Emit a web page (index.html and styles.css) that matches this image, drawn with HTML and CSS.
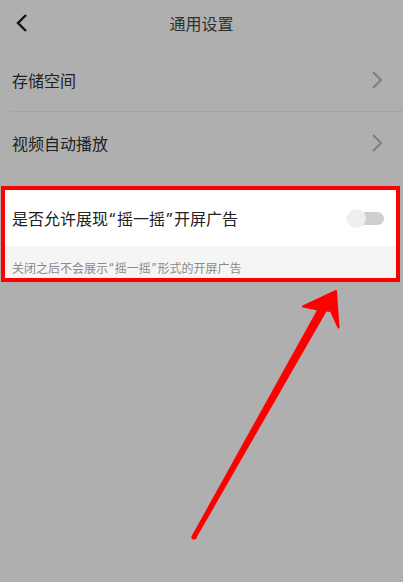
FILE: index.html
```html
<!DOCTYPE html>
<html lang="zh-CN">
<head>
  <meta charset="UTF-8">
  <meta name="viewport" content="width=device-width, initial-scale=1.0">
  <link rel="stylesheet" href="styles.css">
</head>
<body>
  <div class="header">
    <svg class="back" width="14" height="20" viewBox="0 0 14 20">
      <path d="M11 2 L3 10 L11 18" fill="none" stroke="#111" stroke-width="2.4"/>
    </svg>
    <span class="title">通用设置</span>
  </div>

  <div class="list">
    <div class="row">
      <span class="label">存储空间</span>
      <svg class="arrow-right" width="12" height="20" viewBox="0 0 12 20">
        <path d="M2 2 L10 10 L2 18" fill="none" stroke="#7e7e7e" stroke-width="2"/>
      </svg>
    </div>
    <div class="row">
      <span class="label">视频自动播放</span>
      <svg class="arrow-right" width="12" height="20" viewBox="0 0 12 20">
        <path d="M2 2 L10 10 L2 18" fill="none" stroke="#7e7e7e" stroke-width="2"/>
      </svg>
    </div>
  </div>

  <div class="highlight">
    <div class="switch-row">
      <span class="label">是否允许展现<span class="q">“</span>摇一摇<span class="q">”</span>开屏广告</span>
      <div class="switch"><div class="knob"></div></div>
    </div>
    <div class="note">关闭之后不会展示<span class="q">“</span>摇一摇<span class="q">”</span>形式的开屏广告</div>
  </div>

  <!-- 标注箭头 -->
  <svg class="pointer" width="403" height="582" viewBox="0 0 403 582">
    <polygon points="191.8,535.8 321.1,302.8 328.9,307.2 196.2,538.2" fill="#ff0000"/>
    <circle cx="194" cy="537" r="2.6" fill="#ff0000"/>
    <polygon points="336,291 303,306.5 318,309.5 331,311 338.5,327.5" fill="#ff0000" stroke="#ff0000" stroke-width="2" stroke-linejoin="round"/>
  </svg>
</body>
</html>
```

FILE: styles.css
```css
body {
  margin: 0;
  width: 403px;
  height: 582px;
  overflow: hidden;
  background-color: #afafaf;
  font-family: "Noto Sans CJK SC", "Noto Sans", sans-serif;
  position: relative;
}

.header {
  height: 45px;
  display: flex;
  align-items: center;
  justify-content: center;
  position: relative;
}

.back {
  position: absolute;
  left: 15px;
  top: 13px;
}

.title {
  font-size: 16px;
  color: #303030;
}

.list {
  margin-top: 4px;
}

.row {
  height: 62px;
  margin-left: 10px;
  padding-left: 2px;
  padding-right: 20px;
  display: flex;
  align-items: center;
  justify-content: space-between;
  border-bottom: 1px solid #a3a3a3;
}

.row:last-child {
  border-bottom: none;
}

.label {
  font-size: 16px;
  color: #222;
}

/* 引号用窄字形 */
.q {
  font-family: "Noto Sans", sans-serif;
  padding: 0 0.1em;
}

.highlight {
  margin: 12px 3px 0 1px;
  border: 4px solid #ff0000;
  background-color: #f5f5f5;
}

.switch-row {
  height: 56px;
  background-color: #fff;
  display: flex;
  align-items: center;
  justify-content: space-between;
  padding: 0 12px 0 7px;
}

.switch {
  width: 37px;
  height: 13px;
  border-radius: 7px;
  background-color: #cfcfcf;
  position: relative;
}

.knob {
  position: absolute;
  left: 0;
  top: -3px;
  width: 19px;
  height: 19px;
  border-radius: 50%;
  background-color: #efefef;
}

.note {
  height: 32px;
  padding-left: 7px;
  font-size: 12px;
  color: #8a8a8a;
  display: flex;
  align-items: flex-end;
  padding-bottom: 2px;
  box-sizing: border-box;
}

.pointer {
  position: absolute;
  left: 0;
  top: 0;
  pointer-events: none;
}
```
